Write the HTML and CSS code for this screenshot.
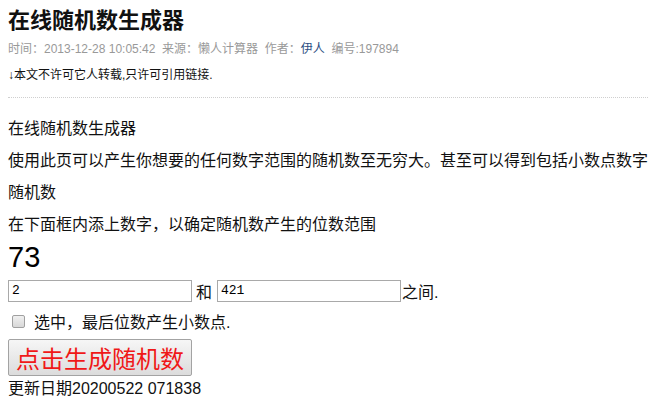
FILE: index.html
```html
<!DOCTYPE html>
<html lang="zh-CN">
<head>
<meta charset="utf-8">
<title>在线随机数生成器</title>
<link rel="stylesheet" href="styles.css">
</head>
<body>
<div class="page">
  <h1 class="title">在线随机数生成器</h1>
  <div class="meta">时间：2013-12-28 10:05:42&nbsp; 来源：懒人计算器&nbsp; 作者：<a class="author" href="#">伊人</a>&nbsp; 编号:197894</div>
  <div class="notice">↓本文不许可它人转载,只许可引用链接.</div>
  <div class="divider"></div>
  <div class="content">
    <p class="line">在线随机数生成器</p>
    <p class="line">使用此页可以产生你想要的任何数字范围的随机数至无穷大。甚至可以得到包括小数点数字</p>
    <p class="line">随机数</p>
    <p class="line">在下面框内添上数字，以确定随机数产生的位数范围</p>
    <div class="result">73</div>
    <div class="range">
      <input class="num" type="text" value="2">
      <span class="and">和</span>
      <input class="num" type="text" value="421">
      <span class="between">之间.</span>
    </div>
    <label class="decimal"><input class="check" type="checkbox"><span>选中，最后位数产生小数点.</span></label>
    <button class="go" type="button">点击生成随机数</button>
    <div class="updated">更新日期20200522 071838</div>
  </div>
</div>
</body>
</html>
```

FILE: styles.css
```css
html, body {
  margin: 0;
  padding: 0;
  background: #fff;
}
body {
  font-family: "Liberation Sans", "Noto Sans CJK SC", sans-serif;
  color: #000;
}
.page {
  width: 640px;
  padding: 6px 8px 0;
}
.title {
  margin: 0;
  font-size: 22px;
  line-height: 30px;
  font-weight: bold;
  color: #111;
}
.meta {
  margin-top: 3px;
  font-size: 12px;
  line-height: 20px;
  color: #999;
}
.author {
  color: #2e4f82;
  text-decoration: none;
}
.notice {
  margin-top: 6px;
  font-size: 12px;
  line-height: 20px;
  color: #111;
}
.divider {
  margin-top: 12px;
  border-top: 1px dotted #cfcfcf;
}
.content {
  padding-top: 15px;
  font-size: 16px;
  color: #111;
}
.line {
  margin: 0;
  line-height: 32px;
  white-space: nowrap;
}
.result {
  font-size: 29px;
  line-height: 33px;
  color: #000;
}
.range {
  display: flex;
  align-items: center;
  height: 21px;
  margin-top: 6px;
}
.num {
  box-sizing: border-box;
  width: 184px;
  height: 22px;
  margin: 0;
  padding: 1px 3px;
  border: 1px solid #a9a9a9;
  font-family: "Liberation Mono", "DejaVu Sans Mono", monospace;
  font-size: 13px;
  color: #000;
  background: #fff;
}
.and {
  margin: 0 5px 0 4px;
}
.between {
  margin-left: 1px;
}
.decimal {
  display: flex;
  align-items: center;
  height: 20px;
  margin-top: 10px;
}
.check {
  appearance: none;
  -webkit-appearance: none;
  box-sizing: border-box;
  width: 13px;
  height: 13px;
  margin: 0 9px 0 4px;
  border: 1px solid #a0a0a0;
  border-radius: 2px;
  background: linear-gradient(#f0f0f0, #d8d8d8);
}
.go {
  display: block;
  box-sizing: border-box;
  width: 184px;
  height: 37px;
  margin-top: 8px;
  padding: 0;
  border: 1px solid #a3a3a3;
  border-radius: 2px;
  background: linear-gradient(#f6f6f6, #dcdcdc);
  color: #f01818;
  font-family: "Noto Sans CJK SC", sans-serif;
  font-size: 24px;
  line-height: 35px;
}
.updated {
  line-height: 26px;
}
```
